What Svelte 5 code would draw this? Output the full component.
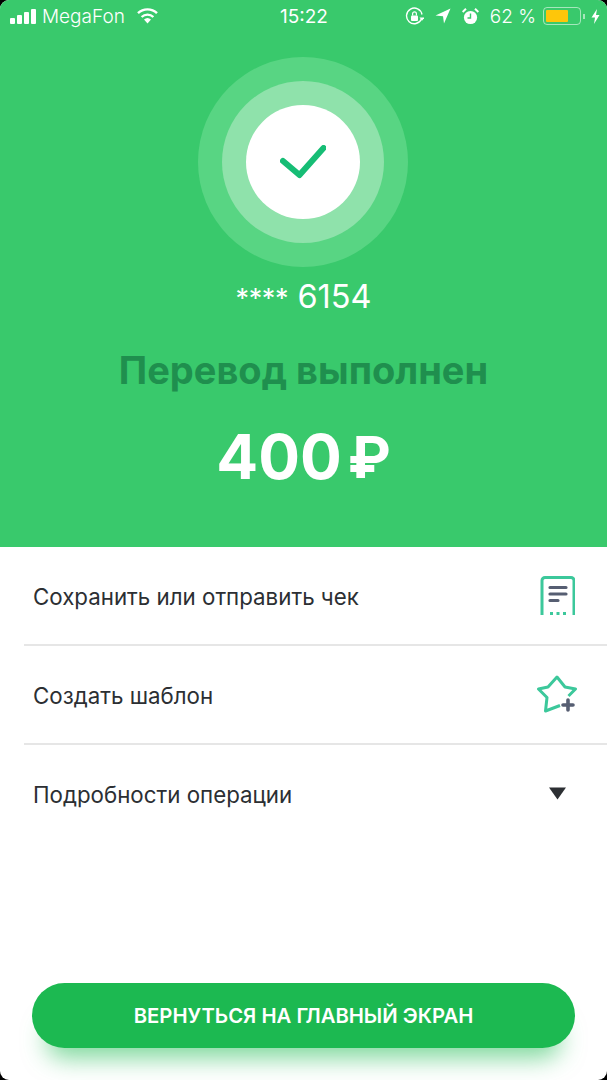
<script>
	let rows = [
		{ label: 'Сохранить или отправить чек', icon: 'receipt' },
		{ label: 'Создать шаблон', icon: 'star' },
		{ label: 'Подробности операции', icon: 'caret' }
	];
</script>

<div class="screen">
	<section class="hero">
		<div class="status">
			<div class="status-left">
				<div class="bars">
					<span style="height: 6px"></span>
					<span style="height: 9px"></span>
					<span style="height: 12px"></span>
					<span style="height: 15px"></span>
				</div>
				<span class="carrier">MegaFon</span>
				<svg class="wifi" width="23" height="16" viewBox="0 0 23 16">
					<path d="M11.5 15.5 L8 11.6 A5.2 5.2 0 0 1 15 11.6 Z" fill="#fff" />
					<path d="M5.6 9 A8.6 8.6 0 0 1 17.4 9" fill="none" stroke="#fff" stroke-width="2.4" />
					<path d="M2 5.2 A13.6 13.6 0 0 1 21 5.2" fill="none" stroke="#fff" stroke-width="2.4" />
				</svg>
			</div>
			<span class="clock">15:22</span>
			<div class="status-right">
				<svg width="19" height="19" viewBox="0 0 19 19" fill="none">
					<path d="M16.5 12 A7.8 7.8 0 1 1 17 7.5" stroke="#fff" stroke-width="1.4" />
					<path d="M14.5 10.5 h5 l-2.5 3.2 Z" fill="#fff" />
					<rect x="6" y="8.5" width="7" height="5.5" rx="1" fill="#fff" />
					<path d="M7.6 8.5 V6.8 a1.9 1.9 0 0 1 3.8 0 V8.5" stroke="#fff" stroke-width="1.2" />
				</svg>
				<svg class="arrow" width="16" height="16" viewBox="0 0 16 16">
					<path d="M15.5 0.5 L0.5 7.5 L8 8.2 L9 15.5 Z" fill="#fff" />
				</svg>
				<svg class="alarm" width="17" height="17" viewBox="0 0 17 17" fill="none">
					<circle cx="8.5" cy="9.5" r="6.6" fill="#fff" />
					<path d="M8.5 5.5 V10 H5.5" stroke="#39c96c" stroke-width="1.4" />
					<path d="M0.6 4 L4 0.8 M16.4 4 L13 0.8" stroke="#fff" stroke-width="2" />
				</svg>
				<span class="percent">62 %</span>
				<div class="battery"><div class="charge"></div></div>
				<span class="nub"></span>
				<svg class="bolt" width="9" height="15" viewBox="0 0 9 15">
					<path d="M6 0 L0.5 8.5 H4 L3 15 L8.5 6 H5 Z" fill="#fff" />
				</svg>
			</div>
		</div>

		<div class="ring-outer">
			<div class="ring-mid">
				<div class="ring-inner">
					<svg width="46" height="34" viewBox="0 0 46 34" fill="none">
						<path d="M3 16 L19.5 30 L43.5 3" stroke="#16bd75" stroke-width="6" stroke-linecap="round" stroke-linejoin="round" />
					</svg>
				</div>
			</div>
		</div>

		<div class="card"><span class="stars">****</span> 6154</div>
		<h1>Перевод выполнен</h1>
		<div class="amount">400<span class="rub">₽</span></div>
	</section>

	<div class="list">
		{#each rows as row}
			<div class="row">
				<span class="label">{row.label}</span>
				<div class="row-icon">
					{#if row.icon == 'receipt'}
						<svg width="36" height="40" viewBox="0 0 36 40" fill="none">
							<path d="M3 39 V4.5 a3 3 0 0 1 3 -3 H32 a3 3 0 0 1 3 3 V39" stroke="#3cc89b" stroke-width="3" />
							<path d="M11 11.5 H27 M11 18 H27 M11 24.5 H19" stroke="#565e72" stroke-width="3.2" stroke-linecap="round" />
							<path d="M11 37.5 H14 M17.5 37.5 H20.5 M24 37.5 H27" stroke="#3cc89b" stroke-width="3" />
						</svg>
					{:else if row.icon == 'star'}
						<svg width="42" height="40" viewBox="0 0 42 40" fill="none">
							<path d="M24 30.5 L9.5 36 L11 22.5 L2.5 14 L12 12 L21 2 L29 12 L39.5 14 L32.5 21" stroke="#3cc89b" stroke-width="3" stroke-linejoin="round" />
							<path d="M32 25 V35 M27 30 H37" stroke="#565e72" stroke-width="3.6" stroke-linecap="round" />
						</svg>
					{:else}
						<svg width="17" height="13" viewBox="0 0 17 13">
							<path d="M0 0.5 H17 L8.5 12.5 Z" fill="#2c2f33" />
						</svg>
					{/if}
				</div>
			</div>
		{/each}
	</div>

	<div class="footer">
		<button>ВЕРНУТЬСЯ НА ГЛАВНЫЙ ЭКРАН</button>
	</div>
</div>

<style>
	:global(body) {
		background: #000;
	}
	.screen {
		width: 607px;
		height: 1080px;
		background: #fff;
		border-radius: 9px;
		overflow: hidden;
		display: flex;
		flex-direction: column;
		font-family: Inter, "Liberation Sans", sans-serif;
	}
	.hero {
		height: 547px;
		background: #39c96c;
		color: #fff;
		display: flex;
		flex-direction: column;
		align-items: center;
		flex-shrink: 0;
	}
	.status {
		align-self: stretch;
		height: 32px;
		padding: 0 7px 0 10px;
		display: flex;
		align-items: center;
		justify-content: space-between;
		font-size: 19px;
		position: relative;
	}
	.status-left,
	.status-right {
		display: flex;
		align-items: center;
	}
	.bars {
		display: flex;
		align-items: flex-end;
		gap: 2px;
		height: 15px;
	}
	.bars span {
		width: 5px;
		background: #fff;
		border-radius: 1px;
	}
	.carrier {
		margin-left: 6px;
		font-weight: 300;
	}
	.wifi {
		margin-left: 11px;
	}
	.clock {
		position: absolute;
		left: 280px;
		font-weight: 400;
	}
	.arrow {
		margin-left: 11px;
	}
	.alarm {
		margin-left: 11px;
	}
	.percent {
		margin-left: 11px;
		font-weight: 300;
		white-space: nowrap;
	}
	.battery {
		margin-left: 7px;
		width: 38px;
		height: 18px;
		box-sizing: border-box;
		border: 1px solid rgba(255, 255, 255, 0.55);
		border-radius: 4px;
		padding: 2px;
	}
	.charge {
		width: 22px;
		height: 12px;
		background: #fec60a;
		border-radius: 1px;
	}
	.nub {
		width: 2px;
		height: 5px;
		margin-left: 2px;
		background: rgba(255, 255, 255, 0.55);
	}
	.bolt {
		margin-left: 6px;
	}
	.ring-outer {
		margin: 25px 1px 0 0;
		width: 210px;
		height: 210px;
		border-radius: 50%;
		background: #58d583;
		display: flex;
		align-items: center;
		justify-content: center;
	}
	.ring-mid {
		width: 162px;
		height: 162px;
		border-radius: 50%;
		background: #8fe2ab;
		display: flex;
		align-items: center;
		justify-content: center;
	}
	.ring-inner {
		width: 114px;
		height: 114px;
		border-radius: 50%;
		background: #fff;
		display: flex;
		align-items: center;
		justify-content: center;
	}
	.card {
		margin-top: 11px;
		font-size: 32.5px;
		line-height: 38px;
		font-weight: 400;
	}
	.stars {
		font-size: 27px;
		letter-spacing: -0.3px;
	}
	h1 {
		margin: 29px 0 0;
		font-size: 38px;
		line-height: 46px;
		font-weight: 700;
		color: #1f8f4e;
	}
	.amount {
		margin-top: 27px;
		font-size: 62px;
		line-height: 74px;
		font-weight: 700;
		display: flex;
		align-items: center;
	}
	.rub {
		margin-left: 6px;
		font-size: 58px;
	}
	.list {
		padding-left: 24px;
		flex: 1;
	}
	.row {
		height: 97px;
		padding: 0 29px 0 9px;
		border-bottom: 2px solid #e6e6e6;
		display: flex;
		align-items: center;
		justify-content: space-between;
		font-size: 22.3px;
		color: #2c2f33;
		box-sizing: content-box;
	}
	.row:last-child {
		border-bottom: 0;
	}
	.label {
		padding-top: 2px;
	}
	.row-icon {
		width: 42px;
		display: flex;
		justify-content: center;
	}
	.footer {
		padding: 0 32px 32px;
	}
	button {
		width: 100%;
		height: 65px;
		border: 0;
		border-radius: 33px;
		background: #1cb951;
		color: #fff;
		font: 600 20.3px Inter, "Liberation Sans", sans-serif;
		box-shadow: 0 24px 24px -14px rgba(40, 190, 90, 0.6);
	}
</style>
